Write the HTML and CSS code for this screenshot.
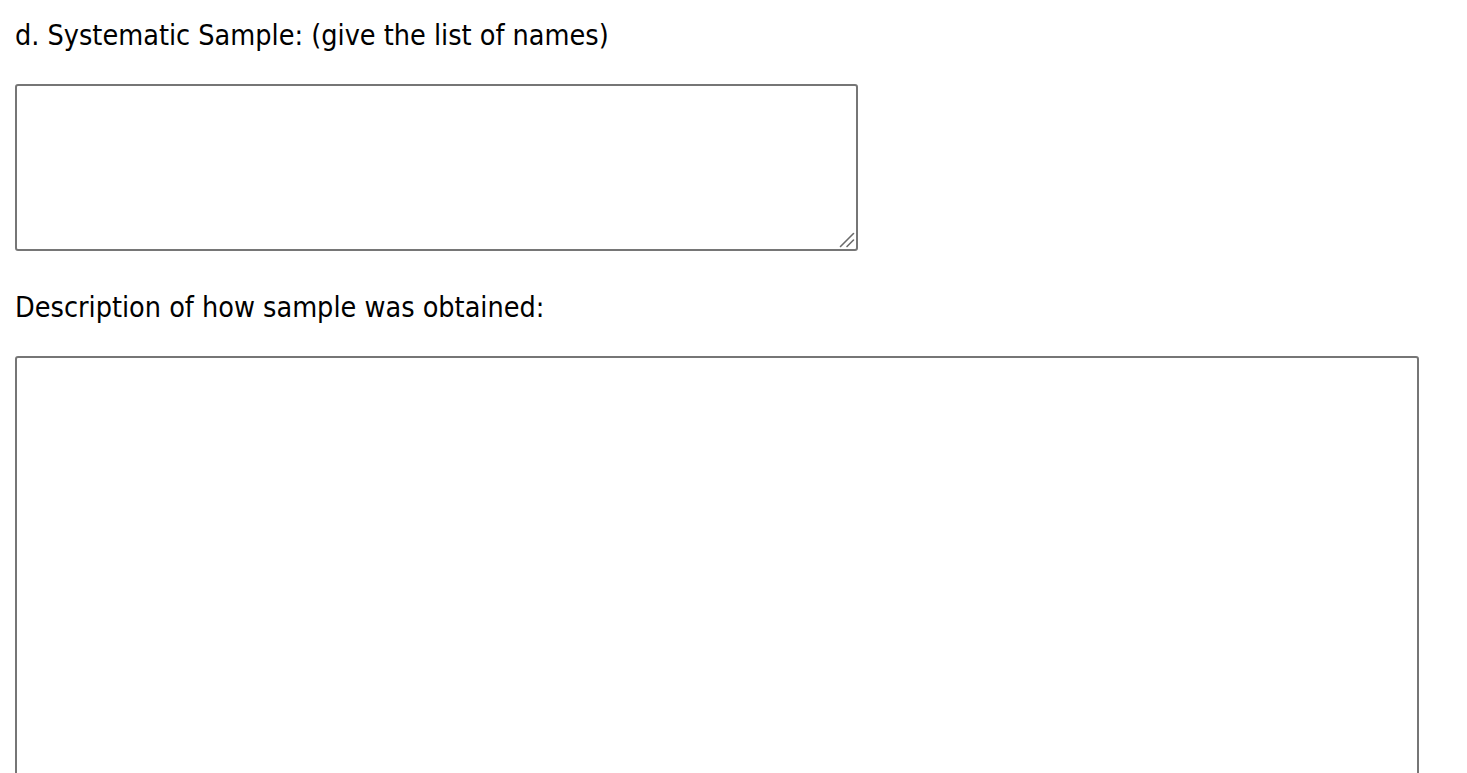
FILE: index.html
```html
<!DOCTYPE html>
<html>
<head>
<meta charset="utf-8">
<link rel="stylesheet" href="styles.css">
</head>
<body>
<form class="form">
  <div class="field field-list">
    <label class="label" for="sys">d. Systematic Sample: (give the list of names)</label>
    <div class="box-wrap">
      <textarea id="sys" class="box box-small"></textarea>
      <svg class="grip" width="16" height="16" viewBox="0 0 16 16" aria-hidden="true">
        <line x1="1.5" y1="14.5" x2="14.5" y2="1.5" stroke="#6b6b6b" stroke-width="1.6" stroke-linecap="round"/>
        <line x1="8" y1="14.5" x2="14.5" y2="8" stroke="#6b6b6b" stroke-width="1.6" stroke-linecap="round"/>
      </svg>
    </div>
  </div>
  <div class="field field-desc">
    <label class="label" for="desc">Description of how sample was obtained:</label>
    <div class="box-wrap">
      <textarea id="desc" class="box box-large"></textarea>
    </div>
  </div>
</form>
</body>
</html>
```

FILE: styles.css
```css
html, body {
  margin: 0;
  padding: 0;
  background: #ffffff;
}
body {
  font-family: "DejaVu Sans Condensed", "DejaVu Sans", sans-serif;
  font-size: 28.5px;
  color: #000000;
  overflow: hidden;
}
.form {
  display: flex;
  flex-direction: column;
  gap: 40px;
  padding: 19px 0 0 15px;
}
.field {
  display: flex;
  flex-direction: column;
  align-items: flex-start;
}
.field-list {
  gap: 32px;
}
.field-desc {
  gap: 32px;
}
.label {
  display: block;
  line-height: 33px;
  padding-left: 0;
}
.box-wrap {
  position: relative;
  line-height: 0;
}
.box {
  display: block;
  margin: 0;
  box-sizing: border-box;
  border: 2px solid #767676;
  border-radius: 3px;
  background: #fff;
  padding: 3px;
  font: inherit;
  resize: none;
  outline: none;
}
.box-small {
  width: 843px;
  height: 167px;
}
.box-large {
  width: 1404px;
  height: 520px;
}
.grip {
  position: absolute;
  right: 3px;
  bottom: 3px;
}
```
